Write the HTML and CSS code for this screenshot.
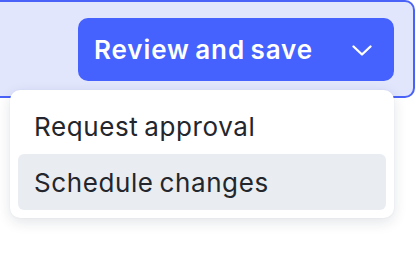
FILE: index.html
```html
<!DOCTYPE html>
<html>
<head>
<meta charset="utf-8">
<link rel="stylesheet" href="styles.css">
</head>
<body>
<div class="bar">
  <div class="split">
    <button class="main-btn" type="button">
      <span class="label">Review and save</span>
      <svg class="chev" width="24" height="24" viewBox="0 0 24 24" fill="none"><path d="M3.5 8.5 L12 16.5 L20.5 8.5" stroke="#fff" stroke-width="2.4" stroke-linecap="round" stroke-linejoin="round"/></svg>
    </button>
    <div class="menu">
      <div class="item">Request approval</div>
      <div class="item active">Schedule changes</div>
    </div>
  </div>
</div>
</body>
</html>
```
FILE: styles.css
```css
html, body {
  margin: 0;
  padding: 0;
  background: #ffffff;
}
body {
  width: 416px;
  height: 260px;
  overflow: hidden;
  font-family: Inter, "Noto Sans", sans-serif;
}
.bar {
  box-sizing: border-box;
  margin: 0 1px 0 -20px;
  height: 98px;
  background: #e1e6fd;
  border: 2px solid #4a62f8;
  border-radius: 10px;
  display: flex;
  justify-content: flex-end;
  padding: 16px 19px 0 0;
}
.split {
  position: relative;
}
.main-btn {
  display: flex;
  align-items: center;
  height: 63px;
  width: 316px;
  box-sizing: border-box;
  padding: 0 20px 0 16px;
  border: none;
  border-radius: 10px;
  background: #4561fe;
  color: #ffffff;
  font-family: Inter, "Noto Sans", sans-serif;
  font-size: 26px;
  font-weight: 600;
  letter-spacing: 0.9px;
  word-spacing: -2px;
  cursor: pointer;
}
.label {
  flex: 1;
  text-align: left;
}
.chev {
  display: block;
}
.menu {
  position: absolute;
  top: 72px;
  right: 0;
  width: 384px;
  box-sizing: border-box;
  padding: 8px;
  background: #ffffff;
  border-radius: 10px;
  box-shadow: 0 4px 14px rgba(20, 30, 60, 0.12), 0 0 2px rgba(20, 30, 60, 0.06);
}
.item {
  height: 56px;
  display: flex;
  align-items: center;
  padding-left: 16px;
  border-radius: 6px;
  font-size: 26px;
  letter-spacing: 0.6px;
  word-spacing: -2px;
  color: #23262c;
}
.item.active {
  background: #e9edf1;
}
```
